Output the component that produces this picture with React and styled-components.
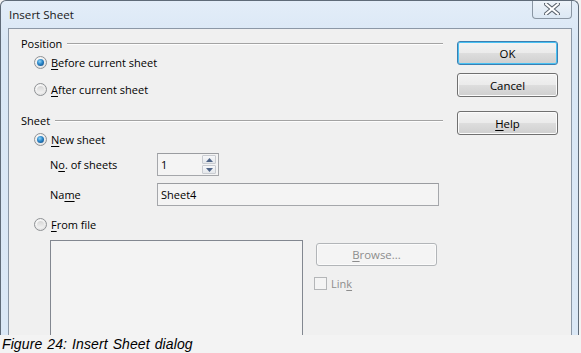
import React from "react";
import styled, { createGlobalStyle, css } from "styled-components";

const Global = createGlobalStyle`
  html, body { margin: 0; padding: 0; background: #f3f3f3; }
  body { font-family: "Open Sans", "Noto Sans", sans-serif; }
  * { box-sizing: border-box; }
`;

const UI = `"Open Sans", "Noto Sans", sans-serif`;
const FS = "11px";

const Page = styled.div`
  width: 581px;
  height: 353px;
  display: flex;
  flex-direction: column;
  overflow: hidden;
`;

const Window = styled.div`
  width: 579px;
  height: 335px;
  flex: none;
  display: flex;
  flex-direction: column;
  overflow: hidden;
  border: 1px solid #5f6b78;
  border-bottom: none;
  border-radius: 6px 6px 0 0;
  padding: 0 6px 0 7px;
  background: linear-gradient(180deg, #e3edf8 0%, #d9e7f5 12%, #dbe8f6 100%);
`;

const TitleBar = styled.div`
  height: 27px;
  flex: none;
  display: flex;
  justify-content: space-between;
  align-items: flex-start;
`;

const Title = styled.div`
  font-family: ${UI};
  font-size: 11.6px;
  color: #1a1a1a;
  padding: 6px 0 0 1px;
  line-height: 16px;
`;

const CloseButton = styled.div`
  width: 40px;
  height: 19px;
  margin-top: -1px;
  border: 1px solid #8a96a3;
  border-top: none;
  border-radius: 0 0 4px 4px;
  background: linear-gradient(180deg, #eef4fa, #dce8f4);
  display: flex;
  align-items: center;
  justify-content: center;
`;

const Client = styled.div`
  flex: none;
  min-height: 330px;
  border: 1px solid #8c98a6;
  background: #f0f0f0;
  display: grid;
  grid-template-columns: 434px 101px;
  column-gap: 14px;
  align-items: start;
  padding: 6px 13px 0 0;
`;

const Main = styled.div`
  display: flex;
  flex-direction: column;
  padding-left: 12px;
`;

const GroupHeader = styled.div`
  display: flex;
  align-items: center;
  height: 16px;
  margin-top: ${(p) => p.$mt || 0}px;
  font-family: ${UI};
  font-size: ${FS};
  color: #000;
  &::after {
    content: "";
    flex: 1;
    height: 1px;
    margin-left: 5px;
    background: #a3a3a3;
    box-shadow: 0 1px 0 #fdfdfd;
  }
`;

const Row = styled.div`
  display: flex;
  align-items: center;
  height: ${(p) => p.$h || 20}px;
  margin-top: ${(p) => p.$mt || 0}px;
  padding-left: ${(p) => p.$indent || 0}px;
  font-family: ${UI};
  font-size: ${FS};
  color: #000;
`;

const Radio = styled.span`
  width: 13px;
  height: 13px;
  flex: none;
  border-radius: 50%;
  border: 1px solid #8f9295;
  background: radial-gradient(circle at 40% 35%, #ffffff 0%, #ececec 55%, #d6d6d6 100%);
  display: flex;
  align-items: center;
  justify-content: center;
  margin-right: 4px;
  &::after {
    content: "";
    width: 7px;
    height: 7px;
    border-radius: 50%;
    ${(p) =>
      p.$checked
        ? css`
            background: radial-gradient(circle at 40% 35%, #8fd3f7 0%, #2a86c8 45%, #0d3f78 100%);
          `
        : css`
            background: linear-gradient(180deg, #d6d6d6, #f2f2f2);
          `}
  }
`;

const Label = styled.span`
  width: ${(p) => p.$w || "auto"};
  flex: none;
  color: ${(p) => (p.$disabled ? "#8d8d8d" : "#000")};
`;

const U = styled.span`
  text-decoration: underline;
  text-underline-offset: 2px;
`;

const Field = styled.div`
  width: ${(p) => p.$w}px;
  height: 23px;
  border: 1px solid #a5a7ab;
  border-top-color: #9a9ca0;
  background: #f4f4f4;
  display: flex;
  align-items: center;
  padding-left: 3px;
  font-family: ${UI};
  font-size: ${FS};
  color: #000;
`;

const FieldText = styled.span`
  flex: 1;
`;

const Spin = styled.div`
  width: 14px;
  height: 21px;
  margin-right: 2px;
  display: flex;
  flex-direction: column;
  justify-content: center;
  gap: 1px;
`;

const SpinHalf = styled.div`
  height: 9px;
  border: 1px solid #c9ccd1;
  border-radius: 1px;
  background: linear-gradient(180deg, #f7f8fa, #e4e7eb);
  display: flex;
  align-items: center;
  justify-content: center;
`;

const ListBox = styled.div`
  width: 253px;
  height: 120px;
  border: 1px solid #828790;
  background: #f3f3f3;
  flex: none;
`;

const FileRow = styled.div`
  display: flex;
  margin-top: 6px;
  padding-left: 29px;
  gap: 13px;
`;

const FileSide = styled.div`
  display: flex;
  flex-direction: column;
  padding-top: 3px;
`;

const Button = styled.div`
  width: ${(p) => p.$w || 101}px;
  height: ${(p) => p.$h || 24}px;
  margin-top: ${(p) => p.$mt || 0}px;
  border-radius: 3px;
  border: 1px solid ${(p) => (p.$default ? "#3c7fb1" : p.$disabled ? "#b2b5b8" : "#707070")};
  box-shadow: ${(p) => (p.$default ? "inset 0 0 0 1px #48c1f3" : "inset 0 0 0 1px #fbfbfb")};
  background: ${(p) =>
    p.$disabled
      ? "#f4f4f4"
      : "linear-gradient(180deg, #f3f3f3 0%, #ebebeb 48%, #dddddd 52%, #cfcfcf 100%)"};
  display: flex;
  align-items: center;
  justify-content: center;
  font-family: ${UI};
  font-size: 11.4px;
  color: ${(p) => (p.$disabled ? "#8d8d8d" : "#000")};
`;

const Buttons = styled.div`
  display: flex;
  flex-direction: column;
`;

const Check = styled.span`
  width: 13px;
  height: 13px;
  flex: none;
  border: 1px solid #b4b6b8;
  background: #f4f4f4;
  margin-right: 4px;
`;

const CheckRow = styled.div`
  display: flex;
  align-items: center;
  margin-top: 10px;
  margin-left: -2px;
  height: 14px;
  font-family: ${UI};
  font-size: ${FS};
`;

const Caption = styled.div`
  height: 18px;
  padding: 1px 0 0 2px;
  font-family: "Liberation Sans", Arial, sans-serif;
  font-style: italic;
  font-size: 14px;
  line-height: 16px;
  letter-spacing: 0.1px;
  word-spacing: 1px;
  color: #000;
`;

const Tri = ({ up }) => (
  <svg width="7" height="4" viewBox="0 0 7 4">
    <path d={up ? "M0 4 L3.5 0 L7 4 Z" : "M0 0 L3.5 4 L7 0 Z"} fill="#4e6487" />
  </svg>
);

export default function App() {
  return (
    <Page>
      <Global />
      <Window>
        <TitleBar>
          <Title>Insert Sheet</Title>
          <CloseButton>
            <svg width="16" height="12" viewBox="0 0 16 12">
              <path d="M2 1 L14 11 M14 1 L2 11" stroke="#5d6670" strokeWidth="4.2" strokeLinecap="square" />
              <path d="M2 1 L14 11 M14 1 L2 11" stroke="#ffffff" strokeWidth="2" strokeLinecap="square" />
            </svg>
          </CloseButton>
        </TitleBar>
        <Client>
          <Main>
            <GroupHeader>Position</GroupHeader>
            <Row $mt={1} $indent={13}>
              <Radio $checked />
              <Label><U>B</U>efore current sheet</Label>
            </Row>
            <Row $mt={7} $indent={13}>
              <Radio />
              <Label><U>A</U>fter current sheet</Label>
            </Row>
            <GroupHeader $mt={13}>Sheet</GroupHeader>
            <Row $mt={1} $indent={13}>
              <Radio $checked />
              <Label><U>N</U>ew sheet</Label>
            </Row>
            <Row $mt={4} $h={23} $indent={29}>
              <Label $w="107px">N<U>o</U>. of sheets</Label>
              <Field $w={62}>
                <FieldText>1</FieldText>
                <Spin>
                  <SpinHalf><Tri up /></SpinHalf>
                  <SpinHalf><Tri /></SpinHalf>
                </Spin>
              </Field>
            </Row>
            <Row $mt={7} $h={23} $indent={29}>
              <Label $w="107px">Na<U>m</U>e</Label>
              <Field $w={282}>
                <FieldText>Sheet4</FieldText>
              </Field>
            </Row>
            <Row $mt={8} $indent={13}>
              <Radio />
              <Label><U>F</U>rom file</Label>
            </Row>
            <FileRow>
              <ListBox />
              <FileSide>
                <Button $w={121} $h={23} $disabled><U>B</U>rowse...</Button>
                <CheckRow>
                  <Check />
                  <Label $disabled>Lin<U>k</U></Label>
                </CheckRow>
              </FileSide>
            </FileRow>
          </Main>
          <Buttons>
            <Button $default $mt={6}>OK</Button>
            <Button $mt={8}>Cancel</Button>
            <Button $mt={14}><U>H</U>elp</Button>
          </Buttons>
        </Client>
      </Window>
      <Caption>Figure 24: Insert Sheet dialog</Caption>
    </Page>
  );
}
